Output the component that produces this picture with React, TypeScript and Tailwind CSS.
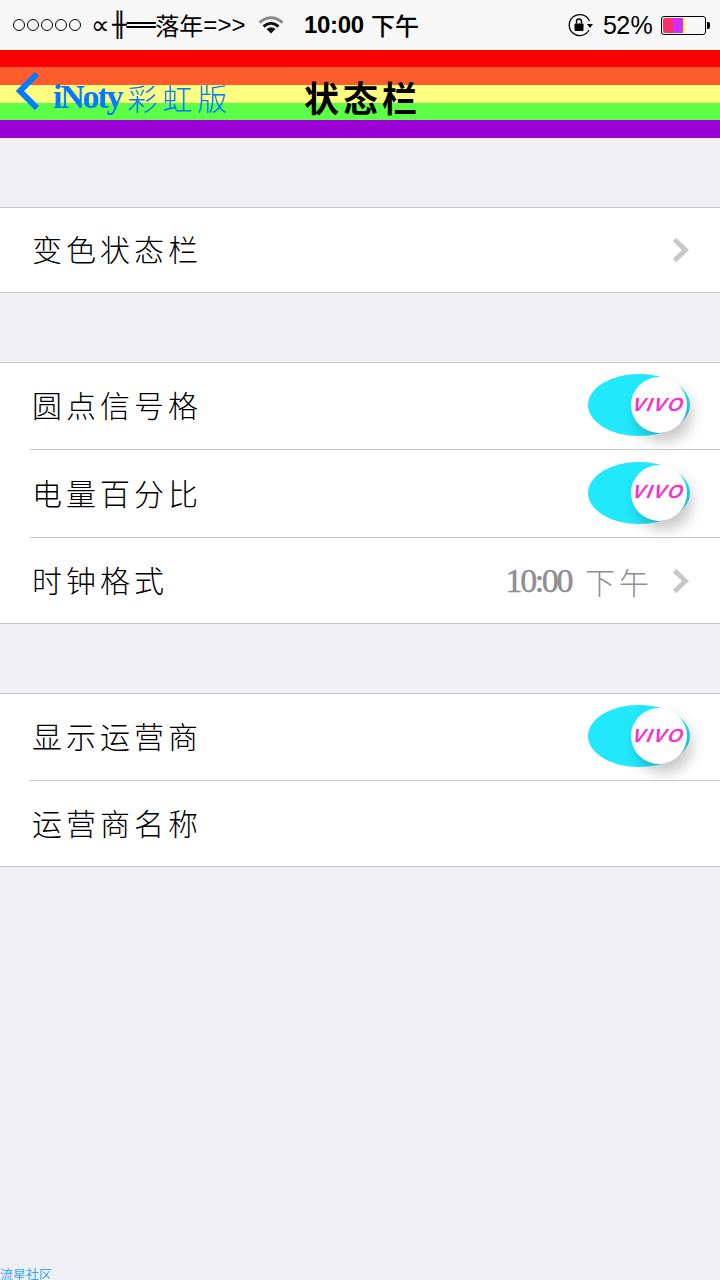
const cjk = { fontFamily: '"Noto Sans CJK SC", "Liberation Sans", sans-serif' };

function Chevron() {
  return (
    <svg width="18" height="26" viewBox="0 0 18 26" className="shrink-0" aria-hidden>
      <path d="M2.5 2.5 L13.5 13 L2.5 23.5" fill="none" stroke="#c7c7cc" strokeWidth="5" />
    </svg>
  );
}

function Toggle() {
  return (
    <div className="relative mb-[2px] w-[102px] h-[62px] rounded-[50%] bg-[#22e8fc]">
      <div className="absolute left-[43px] top-[3px] w-[56px] h-[56px] rounded-full bg-white shadow-[5px_9px_14px_rgba(0,0,0,0.22)] flex items-center justify-center">
        <span className="text-[#f733c8] text-[19px] font-bold italic tracking-[1.5px] font-['Liberation_Sans'] -skew-x-12">VIVO</span>
      </div>
    </div>
  );
}

function Row({ label, height, inset, children }: { label: string; height: string; inset?: boolean; children?: React.ReactNode }) {
  return (
    <div className={`flex items-center pr-[30px] ${height} ${inset ? 'ml-[30px] border-b border-[#c8c7cc]' : 'pl-[30px]'}`}>
      <span style={cjk} className="flex-1 pl-[2px] pb-[4px] text-[30px] font-light tracking-[4px] text-black leading-none">{label}</span>
      {children}
    </div>
  );
}

function Group({ children }: { children: React.ReactNode }) {
  return <div className="bg-white border-y border-[#c8c7cc]">{children}</div>;
}

export default function App() {
  return (
    <div className="relative w-[720px] h-[1280px] overflow-hidden bg-[#efeff4]">
      {/* status bar */}
      <div className="h-[50px] bg-[#f7f7f7] flex items-center text-black">
        <div className="flex gap-[2px] ml-[13px] mr-[12px]">
          {[0, 1, 2, 3, 4].map((i) => (
            <span key={i} className="w-[12px] h-[12px] rounded-full border border-black" />
          ))}
        </div>
        <span className="w-[155px] flex items-center text-[24px] leading-none whitespace-nowrap">
          <span className="font-['DejaVu_Sans'] text-[26px] w-[21px] -ml-[2px]">∝</span>
          <span className="font-['DejaVu_Sans']">╫══</span>
          <span style={cjk}>落年</span>
          <span className="font-['Liberation_Sans']">=&gt;&gt;</span>
        </span>
        <svg width="26" height="18" viewBox="0 0 26 18" className="ml-[10px]" aria-hidden>
          <path d="M1.5 6.5 Q13 -3 24.5 6.5" fill="none" stroke="#8a8a8a" strokeWidth="3" />
          <path d="M5.5 10.5 Q13 4 20.5 10.5" fill="none" stroke="#111" strokeWidth="3" />
          <path d="M8.5 13 Q13 9.5 17.5 13 L13 17.5 Z" fill="#111" />
        </svg>
        <span className="ml-[20px] text-[24px] font-bold font-['Liberation_Sans'] tracking-[-0.3px] leading-none whitespace-nowrap">10:00</span>
        <span style={cjk} className="ml-[7px] text-[24px] font-medium leading-none whitespace-nowrap">下午</span>
        <svg width="26" height="24" viewBox="0 0 26 24" className="ml-[149px]" aria-hidden>
          <path d="M21 17 A10.5 10.5 0 1 1 21.4 8" fill="none" stroke="#000" strokeWidth="1.3" />
          <path d="M19 11 L25 11 L22 15 Z" fill="#000" />
          <rect x="6.5" y="10.5" width="9" height="7.5" rx="1" fill="#000" />
          <path d="M8.5 10.5 V8.5 A2.5 2.5 0 0 1 13.5 8.5 V10.5" fill="none" stroke="#000" strokeWidth="1.4" />
        </svg>
        <span className="ml-[9px] text-[25px] font-['Liberation_Sans'] leading-none tracking-[-0.6px]">52<span className="ml-[1px]">%</span></span>
        <div className="ml-[9px] w-[45px] h-[19px] border border-black rounded-[3px] p-[1px] flex">
          <div className="w-[10px] bg-[#fb3068] rounded-l-[2px]" />
          <div className="w-[10px] bg-[#cc30fc]" />
          <div className="w-[2px] bg-[#fff34a]" />
        </div>
        <div className="ml-[1px] w-[3px] h-[7px] bg-black rounded-r-[2px]" />
      </div>

      {/* rainbow nav bar */}
      <div className="relative h-[88px] bg-[linear-gradient(#ff0000_0,#ff0000_17px,#ff5c2e_17px,#ff5c2e_35px,#ffff80_35px,#ffff80_53px,#5cff45_53px,#5cff45_70px,#9b00d4_70px)] flex items-center">
        <svg width="28" height="42" viewBox="0 0 28 42" className="ml-[15px] mb-[7px]" aria-hidden>
          <path d="M22 4 L5 21 L22 38" fill="none" stroke="#007aff" strokeWidth="6" />
        </svg>
        <span className="ml-[10px] mt-[6px] font-['Liberation_Serif'] font-bold text-[34px] text-[#007aff] leading-none tracking-[-2.2px]">iNoty</span>
        <span style={cjk} className="ml-[6px] mt-[6px] text-[30px] font-light text-[#007aff] leading-none tracking-[5px]">彩虹版</span>
        <span style={cjk} className="absolute left-[304px] top-[29px] text-[35px] font-bold text-black leading-none tracking-[4px]">状态栏</span>
      </div>

      <div className="h-[69px]" />
      <Group>
        <Row label="变色状态栏" height="h-[84px]"><Chevron /></Row>
      </Group>

      <div className="h-[69px]" />
      <Group>
        <Row label="圆点信号格" height="h-[87px]" inset><Toggle /></Row>
        <Row label="电量百分比" height="h-[88px]" inset><Toggle /></Row>
        <Row label="时钟格式" height="h-[85px]">
          <span className="font-['Liberation_Serif'] text-[34px] tracking-[-2.4px] text-[#8e8e93] leading-none [-webkit-text-stroke:0.5px_#8e8e93]">10:00</span>
          <span style={cjk} className="ml-[14px] mr-[19px] text-[30px] font-light tracking-[4px] text-[#8e8e93] leading-none">下午</span>
          <Chevron />
        </Row>
      </Group>

      <div className="h-[69px]" />
      <Group>
        <Row label="显示运营商" height="h-[87px]" inset><Toggle /></Row>
        <Row label="运营商名称" height="h-[85px]" />
      </Group>

      <span style={cjk} className="absolute left-0 bottom-0 text-[13px] leading-[13px] text-[#3aa6f2] whitespace-nowrap">流星社区</span>
    </div>
  );
}
